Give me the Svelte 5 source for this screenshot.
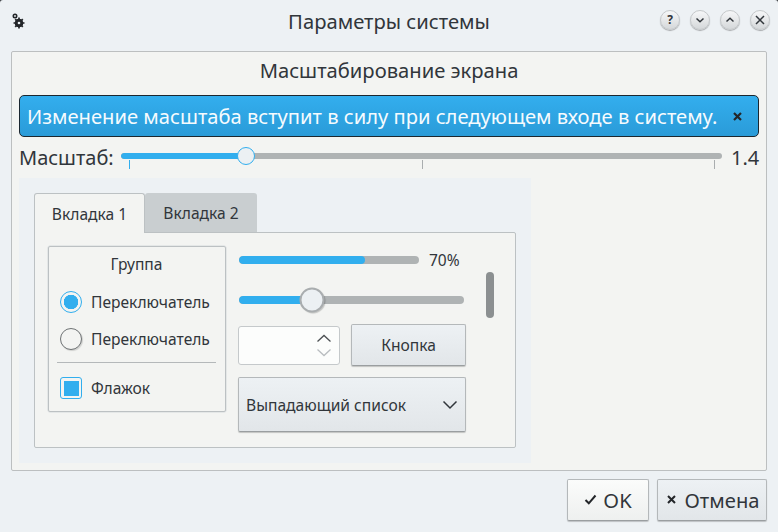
<script>
  const ticks = [0, 50, 100];
</script>

<div class="window">
  <header class="titlebar">
    <svg class="app-icon" width="14" height="16" viewBox="0 0 14 16">
      <circle cx="3" cy="3" r="1.700" fill="none" stroke="#232629" stroke-width="1.600" />
      <circle cx="7" cy="10" r="3" fill="none" stroke="#232629" stroke-width="2.600" />
      <path d="M7 4.500v11M1.500 10h11M3.200 6.200l7.600 7.600M10.800 6.200l-7.600 7.600" stroke="#232629" stroke-width="1.700" />
      <circle cx="7" cy="10" r="1.300" fill="#edf1f4" />
    </svg>
    <div class="window-title">Параметры системы</div>
    <div class="window-buttons">
      <span class="wbtn q">?</span>
      <span class="wbtn"><svg width="10" height="10" viewBox="0 0 10 10"><path d="M1.500 3.500 5 6.800l3.500-3.300" /></svg></span>
      <span class="wbtn"><svg width="10" height="10" viewBox="0 0 10 10"><path d="M1.500 6.500 5 3.200l3.500 3.300" /></svg></span>
      <span class="wbtn"><svg width="10" height="10" viewBox="0 0 10 10"><path d="M1 1l8 8M9 1l-8 8" /></svg></span>
    </div>
  </header>

  <main class="panel">
    <h1>Масштабирование экрана</h1>
    <div class="banner">
      <span>Изменение масштаба вступит в силу при следующем входе в систему.</span>
      <svg class="banner-x" width="9" height="9" viewBox="0 0 9 9"><path d="M1 1l7 7M8 1l-7 7" /></svg>
    </div>
    <div class="scale-row">
      <span class="scale-label">Масштаб:</span>
      <div class="scale-slider">
        <div class="track"><div class="fill" style="width: 20.8%"></div></div>
        <div class="handle small" style="left: 20.8%"></div>
        <div class="ticks">
          {#each ticks as t}
            <i class:first={t === 0}></i>
          {/each}
        </div>
      </div>
      <span class="scale-value">1.4</span>
    </div>

    <section class="preview">
      <div class="tabs">
        <div class="tab active">Вкладка 1</div>
        <div class="tab">Вкладка 2</div>
      </div>
      <div class="pane">
        <div class="group">
          <div class="group-title">Группа</div>
          <label class="opt first-opt"><span class="radio on"></span>Переключатель</label>
          <label class="opt"><span class="radio"></span>Переключатель</label>
          <hr />
          <label class="opt"><span class="check"></span>Флажок</label>
        </div>

        <div class="controls">
          <div class="progress-row">
            <div class="progress"><div class="fill" style="width: 70%"></div></div>
            <span>70%</span>
          </div>
          <div class="big-slider">
            <div class="track"><div class="fill" style="width: 32%"></div></div>
            <div class="handle" style="left: 32.4%"></div>
          </div>
          <div class="spin-row">
            <div class="spin">
              <svg width="16" height="27" viewBox="0 0 16 27">
                <path d="M1.500 9.500 8 3.500l6.500 6" stroke="#4d5154" />
                <path d="M1.500 17.500 8 23.500l6.500-6" stroke="#b9bdc0" />
              </svg>
            </div>
            <div class="btn push">Кнопка</div>
          </div>
          <div class="btn combo">
            <span>Выпадающий список</span>
            <svg width="16" height="10" viewBox="0 0 16 10"><path d="M1.500 1.500 8 8l6.500-6.500" /></svg>
          </div>
        </div>

        <div class="scrollbar"></div>
      </div>
    </section>
  </main>

  <footer class="actions">
    <div class="btn action ok">
      <svg width="13" height="11" viewBox="0 0 13 11"><path d="M1.500 6 4.800 9.300 11.500 1.500" /></svg>
      OK
    </div>
    <div class="btn action cancel">
      <svg width="9" height="9" viewBox="0 0 9 9"><path d="M1 1l7 7M8 1l-7 7" /></svg>
      Отмена
    </div>
  </footer>
</div>

<style>
  :global(body) {
    margin: 0;
    background: #3a3d40;
  }

  .window {
    width: 778px;
    height: 532px;
    box-sizing: border-box;
    padding: 0 11px;
    display: flex;
    flex-direction: column;
    background: #edf1f4;
    border-radius: 3px 3px 0 0;
    color: #232629;
    font-family: "Noto Sans", sans-serif;
    font-size: 15.6px;
    overflow: hidden;
  }

  .titlebar {
    height: 51px;
    flex: none;
    display: flex;
    align-items: center;
    justify-content: center;
    position: relative;
    padding-bottom: 10px;
    box-sizing: border-box;
  }

  .app-icon {
    position: absolute;
    left: 1px;
    top: 13px;
  }

  .window-title {
    font-size: 20.2px;
    color: #31363b;
  }

  .window-buttons {
    position: absolute;
    right: -3px;
    top: 10px;
    display: flex;
    gap: 10px;
  }

  .wbtn {
    width: 18px;
    height: 18px;
    border-radius: 50%;
    display: flex;
    align-items: center;
    justify-content: center;
    background: linear-gradient(#f6f7f8, #d5d8da);
    border: 1px solid #c5c8ca;
    box-shadow: 0 1px 1px rgba(0, 0, 0, 0.3);
    font-size: 12px;
    font-weight: 700;
    line-height: 1;
    color: #31363b;
  }

  .wbtn path {
    fill: none;
    stroke: #31363b;
    stroke-width: 1.500;
  }

  .panel {
    height: 420px;
    flex: none;
    box-sizing: border-box;
    padding: 0 7px;
    background: #f3f4f2;
    border: 1px solid #bcbfc0;
    border-radius: 2px;
    display: flex;
    flex-direction: column;
  }

  h1 {
    margin: 0;
    height: 43px;
    flex: none;
    box-sizing: border-box;
    padding-bottom: 7px;
    display: flex;
    align-items: center;
    justify-content: center;
    font-size: 20.2px;
    font-weight: 400;
    color: #31363b;
  }

  .banner {
    height: 42px;
    flex: none;
    box-sizing: border-box;
    padding: 0 16px 0 7px;
    display: flex;
    align-items: center;
    justify-content: space-between;
    border: 1px solid #1b2730;
    border-radius: 5px;
    background: linear-gradient(#33aeee, #2a9bd8);
    color: #f6fbfe;
    font-size: 20.15px;
    white-space: nowrap;
  }

  .banner-x path {
    fill: none;
    stroke: #232629;
    stroke-width: 2.200;
  }

  .scale-row {
    height: 41px;
    flex: none;
    display: flex;
    align-items: center;
    font-size: 20px;
    color: #31363b;
  }

  .scale-label {
    width: 102px;
    flex: none;
  }

  .scale-slider {
    width: 601px;
    height: 6px;
    flex: none;
    position: relative;
    margin-top: -3px;
  }

  .scale-value {
    margin-left: 9px;
  }

  .track {
    height: 100%;
    background: #afb3b4;
    border-radius: 4px;
    overflow: hidden;
  }

  .track .fill,
  .progress .fill {
    height: 100%;
    background: #31aeee;
    border-radius: 4px;
  }

  .handle {
    position: absolute;
    top: 50%;
    width: 25px;
    height: 25px;
    box-sizing: border-box;
    transform: translate(-50%, -50%);
    border-radius: 50%;
    background: #ecf0f3;
    border: 2px solid #a9adaf;
    box-shadow: 1px 1px 1px rgba(0, 0, 0, 0.2);
  }

  .handle.small {
    width: 18px;
    height: 18px;
    border: 1px solid #31aeee;
    box-shadow: none;
  }

  .ticks {
    position: absolute;
    left: 8px;
    right: 7px;
    top: 7px;
    display: flex;
    justify-content: space-between;
  }

  .ticks i {
    width: 1px;
    height: 9px;
    background: #a9adaf;
  }

  .ticks i.first {
    background: #31aeee;
  }

  .preview {
    width: 512px;
    height: 285px;
    flex: none;
    box-sizing: border-box;
    padding: 15px 15px;
    background: #edf1f4;
  }

  .tabs {
    display: flex;
    height: 40px;
    margin-bottom: -1px;
    position: relative;
  }

  .tab {
    width: 112px;
    box-sizing: border-box;
    display: flex;
    align-items: center;
    justify-content: center;
    border-radius: 3px 3px 0 0;
    font-size: 15.6px;
    color: #31363b;
    background: #c9ced0;
  }

  .tab.active {
    width: 111px;
    background: #f3f4f2;
    border: 1px solid #bcc1c3;
    border-bottom: none;
    position: relative;
    z-index: 1;
  }

  .pane {
    height: 216px;
    box-sizing: border-box;
    padding: 13px 13px;
    display: flex;
    align-items: flex-start;
    background: #f3f4f2;
    border: 1px solid #bcc1c3;
    border-radius: 0 2px 2px 2px;
    position: relative;
  }

  .group {
    width: 178px;
    height: 166px;
    flex: none;
    box-sizing: border-box;
    padding: 0 9px 0 8px;
    border: 1px solid #bcc1c3;
    border-radius: 2px;
    box-shadow: 0 0 0 0.500px #d5d9db;
  }

  .group-title {
    height: 34px;
    display: flex;
    align-items: center;
    justify-content: center;
    font-size: 15.6px;
    color: #31363b;
  }

  .opt {
    height: 37px;
    display: flex;
    align-items: center;
    gap: 9px;
    padding-left: 3px;
    font-size: 15.6px;
    color: #31363b;
    white-space: nowrap;
  }

  .first-opt {
    margin-top: 2px;
  }

  .radio {
    width: 22px;
    height: 22px;
    box-sizing: border-box;
    flex: none;
    border-radius: 50%;
    border: 1px solid #6f7375;
    box-shadow: 1px 1px 1px rgba(0, 0, 0, 0.15);
    background: #f3f4f2;
    position: relative;
  }

  .radio.on {
    border: 1.500px solid #31aeee;
    background: radial-gradient(circle, #31aeee 0 7px, #f3f4f2 7.500px);
    box-shadow: none;
  }

  .check {
    width: 22px;
    height: 22px;
    box-sizing: border-box;
    flex: none;
    border: 1px solid #31aeee;
    border-radius: 3px;
    padding: 2.500px;
    background: #31aeee content-box;
  }

  hr {
    margin: 5px 0 6px;
    border: none;
    height: 1px;
    background: #b4b8ba;
  }

  .controls {
    width: 228px;
    margin-left: 12px;
    flex: none;
    display: flex;
    flex-direction: column;
  }

  .progress-row {
    height: 28px;
    display: flex;
    align-items: center;
    padding-left: 1px;
    font-size: 15.5px;
    color: #31363b;
    margin-bottom: 22px;
  }

  .progress {
    width: 180px;
    height: 8px;
    background: #afb3b4;
    border-radius: 4px;
    overflow: hidden;
    margin-right: 10px;
  }

  .big-slider {
    margin-left: 1px;
    width: 225px;
    height: 8px;
    position: relative;
    margin-bottom: 20px;
  }

  .spin-row {
    display: flex;
    align-items: center;
    gap: 11px;
    margin-bottom: 11px;
  }

  .spin {
    width: 102px;
    height: 39px;
    box-sizing: border-box;
    display: flex;
    align-items: center;
    justify-content: flex-end;
    padding-right: 7px;
    background: #fcfdfc;
    border: 1px solid #c5c9cb;
    border-radius: 3px;
  }

  .spin path,
  .combo path,
  .action path {
    fill: none;
    stroke-width: 1.300;
  }

  .combo path {
    stroke: #31363b;
    stroke-width: 1.500;
  }

  .btn {
    box-sizing: border-box;
    display: flex;
    align-items: center;
    background: linear-gradient(#edf1f4, #e2e6e9);
    border: 1px solid #b4b8ba;
    border-bottom-color: #9a9ea0;
    border-radius: 2px;
    box-shadow: 0 1px 1px rgba(0, 0, 0, 0.2);
    color: #31363b;
    font-size: 15.6px;
    padding-bottom: 1px;
  }

  .push {
    width: 115px;
    height: 42px;
    justify-content: center;
  }

  .combo {
    width: 228px;
    height: 55px;
    justify-content: space-between;
    padding: 0 7px 0 7px;
    white-space: nowrap;
  }

  .scrollbar {
    position: absolute;
    right: 21px;
    top: 39px;
    width: 8px;
    height: 46px;
    border-radius: 4px;
    background: #8b8f91;
  }

  .actions {
    flex: 1;
    display: flex;
    justify-content: flex-end;
    align-items: flex-start;
    gap: 8px;
    padding-top: 8px;
  }

  .action {
    height: 42px;
    justify-content: center;
    gap: 6px;
    font-size: 20.2px;
  }

  .action path {
    stroke: #232629;
    stroke-width: 2;
  }

  .ok {
    width: 82px;
    background: linear-gradient(#fbfcfb, #eef0ef);
  }

  .cancel {
    width: 110px;
    gap: 9px;
    padding-left: 2px;
  }
</style>
